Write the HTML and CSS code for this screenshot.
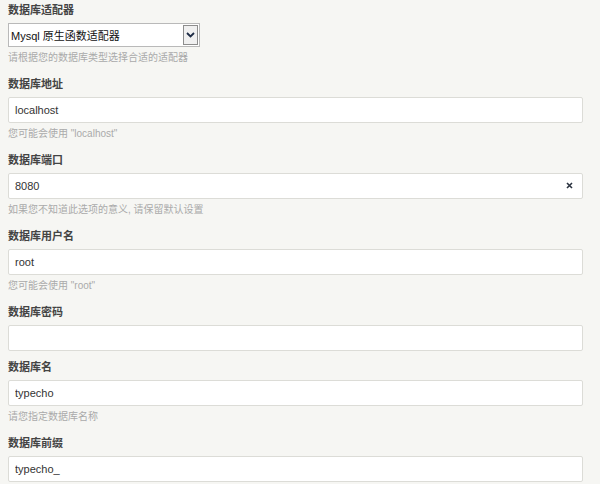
FILE: index.html
```html
<!DOCTYPE html>
<html lang="zh-CN">
<head>
  <meta charset="UTF-8" />
  <title>Typecho 安装程序</title>
  <link rel="stylesheet" href="styles.css">
</head>
<body>
  <ul class="typecho-option">
    <li>
      <label class="typecho-label">数据库适配器</label>
      <div class="fake-select">
        <span class="fake-select-text">Mysql 原生函数适配器</span>
        <span class="fake-select-btn">
          <svg width="9" height="6" viewBox="0 0 9 6"><path d="M1 1 L4.5 4.5 L8 1" fill="none" stroke="#1d2b45" stroke-width="1.8"/></svg>
        </span>
      </div>
      <p class="description">请根据您的数据库类型选择合适的适配器</p>
    </li>
    <li>
      <label class="typecho-label">数据库地址</label>
      <input type="text" class="text" value="localhost" />
      <p class="description">您可能会使用 "localhost"</p>
    </li>
    <li>
      <label class="typecho-label">数据库端口</label>
      <div class="input-wrap">
        <input type="text" class="text" value="8080" />
        <span class="clear-btn">
          <svg width="7" height="7" viewBox="0 0 7 7"><path d="M1 1 L6 6 M6 1 L1 6" stroke="#2b3340" stroke-width="1.6"/></svg>
        </span>
      </div>
      <p class="description">如果您不知道此选项的意义, 请保留默认设置</p>
    </li>
    <li>
      <label class="typecho-label">数据库用户名</label>
      <input type="text" class="text" value="root" />
      <p class="description">您可能会使用 "root"</p>
    </li>
    <li>
      <label class="typecho-label">数据库密码</label>
      <input type="password" class="text" value="" />
    </li>
    <li>
      <label class="typecho-label">数据库名</label>
      <input type="text" class="text" value="typecho" />
      <p class="description">请您指定数据库名称</p>
    </li>
    <li>
      <label class="typecho-label">数据库前缀</label>
      <input type="text" class="text" value="typecho_" />
    </li>
  </ul>
</body>
</html>
```

FILE: styles.css
```css
* {
  box-sizing: border-box;
  margin: 0;
  padding: 0;
}
body {
  background-color: #f6f6f3;
  color: #444;
  font-family: "Liberation Sans", "Noto Sans CJK SC", sans-serif;
  font-size: 11px;
  overflow: hidden;
}
.typecho-option {
  list-style: none;
  width: 575px;
  margin: 2px 0 0 8px;
}
.typecho-option li {
  padding-bottom: 8px;
}
.typecho-label {
  display: block;
  font-weight: bold;
  font-size: 11px;
  line-height: 16px;
  margin-bottom: 5px;
  color: #444;
}
.text {
  display: block;
  width: 100%;
  height: 26px;
  padding: 0 6px;
  background: #fff;
  border: 1px solid #dcdcd7;
  border-radius: 2px;
  font-family: "Liberation Sans", "Noto Sans CJK SC", sans-serif;
  font-size: 11px;
  color: #333;
  outline: none;
}
.input-wrap {
  position: relative;
}
.clear-btn {
  position: absolute;
  right: 10px;
  top: 9px;
  display: flex;
}
.fake-select {
  display: flex;
  align-items: stretch;
  width: 192px;
  height: 24px;
  background: #fff;
  border: 1px solid #b9b9b9;
}
.fake-select-text {
  flex: 1;
  display: flex;
  align-items: center;
  padding-left: 2px;
  font-size: 11px;
  color: #111;
}
.fake-select-btn {
  width: 15px;
  margin: 1px;
  display: flex;
  align-items: center;
  justify-content: center;
  background: #f0f0f0;
  border: 1px solid #8d8d8d;
}
.description {
  margin-top: 4px;
  padding-bottom: 3px;
  font-size: 10px;
  line-height: 14px;
  color: #aaa;
}
```
